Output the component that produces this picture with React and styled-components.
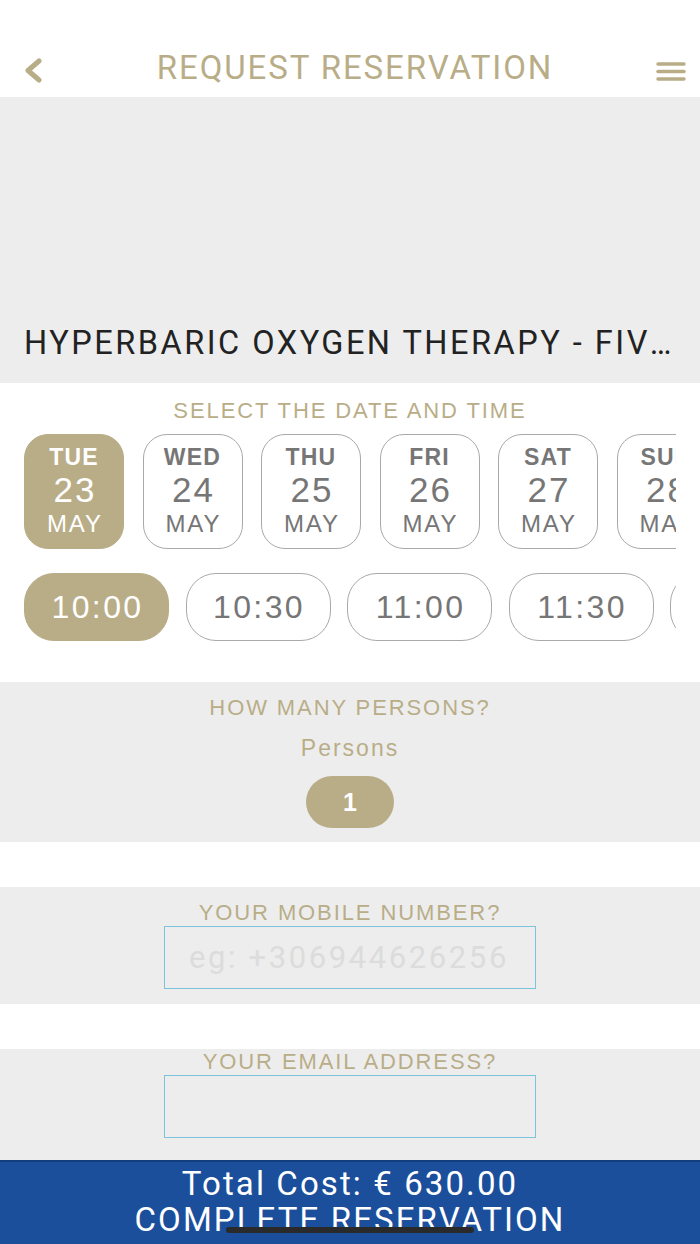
import React from "react";
import styled, { createGlobalStyle } from "styled-components";

const GOLD = "#b9ad88";
const GRAY_BG = "#ededed";

const GlobalStyle = createGlobalStyle`
  html, body { margin: 0; padding: 0; background: #fff; }
  body { font-family: "Liberation Sans", Arial, sans-serif; }
  * { box-sizing: border-box; }
`;

const Page = styled.div`
  position: relative;
  width: 700px;
  height: 1244px;
  overflow: hidden;
  display: flex;
  flex-direction: column;
  background: #fff;
`;

const TopBar = styled.header`
  height: 97px;
  padding: 0 14px 12px 24px;
  display: flex;
  align-items: flex-end;
  justify-content: space-between;
`;

const IconButton = styled.div`
  width: 30px;
  height: 30px;
  display: flex;
  align-items: center;
  justify-content: ${(p) => p.align || "center"};
`;

const Title = styled.h1`
  margin: 0;
  font-family: Roboto, sans-serif;
  font-weight: 400;
  font-size: 33px;
  color: ${GOLD};
  letter-spacing: 1.9px;
  line-height: 34px;
`;

const Hero = styled.section`
  height: 286px;
  background: ${GRAY_BG};
  display: flex;
  align-items: flex-end;
  padding: 0 24px 22px;
`;

const ServiceName = styled.h2`
  margin: 0;
  width: 100%;
  font-family: Roboto, sans-serif;
  font-weight: 400;
  font-size: 32.5px;
  letter-spacing: 2.5px;
  line-height: 36px;
  color: #222;
  white-space: nowrap;
  overflow: hidden;
  text-overflow: ellipsis;
`;

const Section = styled.section`
  height: ${(p) => p.h}px;
  background: ${(p) => (p.gray ? GRAY_BG : "#fff")};
  display: flex;
  flex-direction: column;
  align-items: center;
  padding-top: ${(p) => p.pt || 0}px;
`;

const Label = styled.div`
  font-size: 22px;
  letter-spacing: 1.9px;
  color: ${GOLD};
  line-height: 24px;
  text-transform: uppercase;
`;

const Scroller = styled.div`
  align-self: stretch;
  margin: ${(p) => p.mt}px 24px 0;
  display: flex;
  gap: ${(p) => p.gap}px;
  overflow: hidden;
`;

const DateCard = styled.div`
  flex: 0 0 100px;
  height: 115px;
  border-radius: 24px;
  border: 1px solid ${(p) => (p.active ? GOLD : "#a9a9a9")};
  background: ${(p) => (p.active ? GOLD : "#fff")};
  color: ${(p) => (p.active ? "#fff" : "#767676")};
  display: flex;
  flex-direction: column;
  align-items: center;
  padding-top: 9px;
  white-space: nowrap;
`;

const Day = styled.span`
  font-weight: 700;
  font-size: 23px;
  letter-spacing: 1.2px;
  line-height: 26px;
`;

const DateNum = styled.span`
  font-size: 35px;
  letter-spacing: 2px;
  margin-right: -2px;
  line-height: 40px;
`;

const Month = styled.span`
  font-size: 24px;
  line-height: 28px;
  letter-spacing: 2px;
  margin-right: -2px;
`;

const TimeChip = styled.div`
  flex: 0 0 145px;
  height: 68px;
  border-radius: 30px;
  border: 1px solid ${(p) => (p.active ? GOLD : "#a9a9a9")};
  background: ${(p) => (p.active ? GOLD : "#fff")};
  color: ${(p) => (p.active ? "#fff" : "#767676")};
  display: flex;
  align-items: center;
  justify-content: center;
  font-size: 32px;
  letter-spacing: 2.4px;
  padding-left: 2px;
`;

const SubLabel = styled.div`
  margin-top: 16px;
  font-size: 23px;
  letter-spacing: 2px;
  color: ${GOLD};
  line-height: 24px;
`;

const CountPill = styled.div`
  margin-top: 16px;
  width: 88px;
  height: 52px;
  border-radius: 26px;
  background: ${GOLD};
  color: #fff;
  font-weight: 700;
  font-size: 25px;
  display: flex;
  align-items: center;
  justify-content: center;
`;

const Spacer = styled.div`
  height: 45px;
`;

const Input = styled.input`
  margin-top: ${(p) => p.mt}px;
  width: 372px;
  height: 63px;
  border: 1px solid #7cc3de;
  background: transparent;
  outline: none;
  padding: 0 0 0 24px;
  font-family: Roboto, sans-serif;
  font-size: 31px;
  color: #555;
  letter-spacing: 2.6px;
  &::placeholder {
    color: #dcdcdc;
  }
`;

const Footer = styled.footer`
  flex: 1;
  background: #1b4f9c;
  border-top: 2px solid #123e80;
  display: flex;
  flex-direction: column;
  align-items: center;
  padding-top: 4px;
  font-family: Roboto, sans-serif;
  color: #fff;
  font-size: 33px;
  line-height: 36px;
  letter-spacing: 2.1px;
`;

const HomeIndicator = styled.div`
  position: absolute;
  left: 226px;
  bottom: 11px;
  width: 248px;
  height: 6px;
  border-radius: 3px;
  background: #2a2a2a;
`;

const dates = [
  ["TUE", "23"],
  ["WED", "24"],
  ["THU", "25"],
  ["FRI", "26"],
  ["SAT", "27"],
  ["SUN", "28"],
];

const times = ["10:00", "10:30", "11:00", "11:30", "12:00"];

export default function App() {
  return (
    <Page>
      <GlobalStyle />
      <TopBar>
        <IconButton align="flex-start">
          <svg width="20" height="26" viewBox="0 0 20 26">
            <path
              d="M15 4 L4 13.5 L15 23"
              fill="none"
              stroke={GOLD}
              strokeWidth="5"
              strokeLinecap="round"
              strokeLinejoin="round"
            />
          </svg>
        </IconButton>
        <Title>REQUEST RESERVATION</Title>
        <IconButton>
          <svg width="30" height="24" viewBox="0 0 30 24">
            <g stroke={GOLD} strokeWidth="3.5" strokeLinecap="round">
              <line x1="2" y1="6" x2="28" y2="6" />
              <line x1="2" y1="13.5" x2="28" y2="13.5" />
              <line x1="2" y1="21" x2="28" y2="21" />
            </g>
          </svg>
        </IconButton>
      </TopBar>

      <Hero>
        <ServiceName>HYPERBARIC OXYGEN THERAPY - FIVE SESSIONS</ServiceName>
      </Hero>

      <Section h={299} pt={16}>
        <Label>Select the date and time</Label>
        <Scroller mt={11} gap={18.5}>
          {dates.map(([d, n], i) => (
            <DateCard key={d} active={i === 0}>
              <Day>{d}</Day>
              <DateNum>{n}</DateNum>
              <Month>MAY</Month>
            </DateCard>
          ))}
        </Scroller>
        <Scroller mt={24} gap={16.5}>
          {times.map((t, i) => (
            <TimeChip key={t} active={i === 0}>
              {t}
            </TimeChip>
          ))}
        </Scroller>
      </Section>

      <Section h={160} gray pt={14}>
        <Label>How many persons?</Label>
        <SubLabel>Persons</SubLabel>
        <CountPill>1</CountPill>
      </Section>

      <Spacer />

      <Section h={117} gray pt={14}>
        <Label>Your mobile number?</Label>
        <Input mt={1} placeholder="eg: +306944626256" />
      </Section>

      <Spacer />

      <Section h={111} gray pt={1}>
        <Label>Your email address?</Label>
        <Input mt={1} />
      </Section>

      <Footer>
        <div>Total Cost: € 630.00</div>
        <div>COMPLETE RESERVATION</div>
      </Footer>
      <HomeIndicator />
    </Page>
  );
}
